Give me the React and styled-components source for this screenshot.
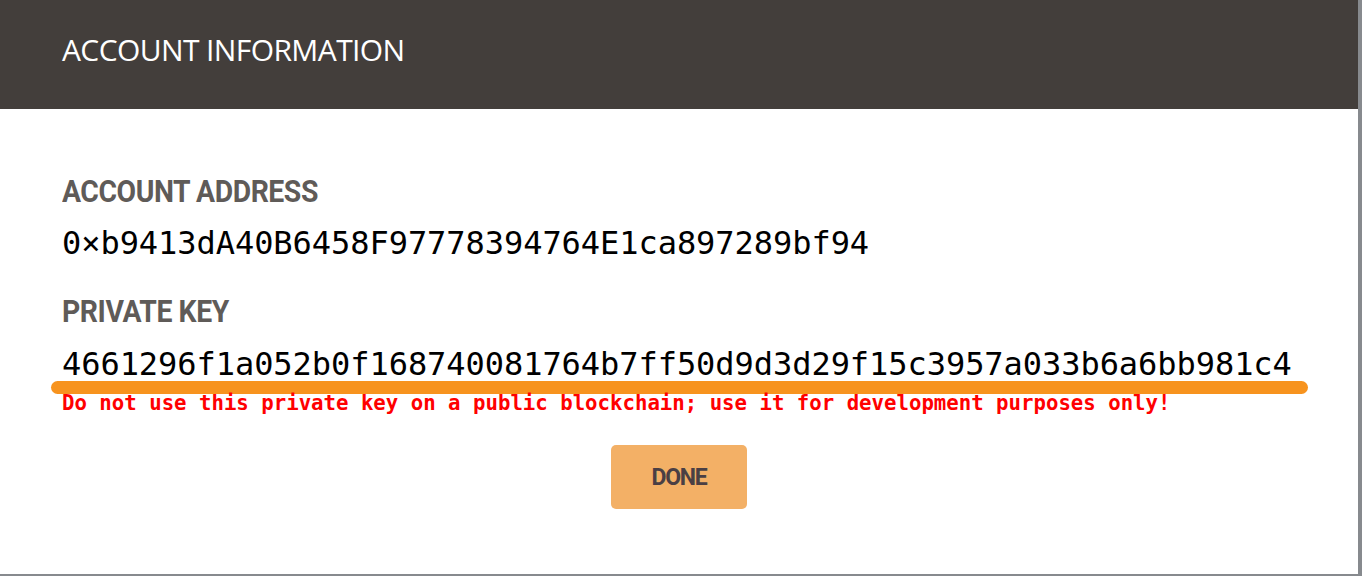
import React from 'react';
import styled, { createGlobalStyle } from 'styled-components';

const GlobalStyle = createGlobalStyle`
  html, body {
    margin: 0;
    padding: 0;
    background: #878a8e;
  }
  #root {
    width: 1362px;
    height: 576px;
  }
`;

const Modal = styled.div`
  width: 1358px;
  height: 574px;
  background: #ffffff;
  display: flex;
  flex-direction: column;
`;

const Header = styled.header`
  height: 109px;
  flex-shrink: 0;
  background: #433e3b;
  display: flex;
  align-items: center;
  padding: 0 62px;
  box-sizing: border-box;
`;

const Title = styled.h1`
  margin: 0;
  padding-bottom: 10px;
  font-family: 'Open Sans', sans-serif;
  font-weight: 400;
  font-size: 30px;
  letter-spacing: -0.6px;
  color: #ffffff;
`;

const Body = styled.div`
  padding: 64px 62px 0;
  display: flex;
  flex-direction: column;
`;

const Label = styled.h2`
  margin: 0;
  margin-top: ${(p) => p.$top || 0}px;
  font-family: Roboto, sans-serif;
  font-weight: 700;
  font-size: 32px;
  letter-spacing: -0.5px;
  line-height: 36px;
  color: #5f5b58;

  span {
    display: inline-block;
    transform: scaleX(0.886);
    transform-origin: left center;
  }
`;

const Value = styled.div`
  font-family: 'DejaVu Sans Mono', monospace;
  font-size: 32px;
  line-height: 40px;
  color: #000000;
  margin-top: 14px;
  letter-spacing: -0.05px;
`;

const KeyBox = styled.div`
  margin-top: 15px;
  margin-left: -11px;
  width: 1257px;
  display: flex;
  flex-direction: column;
`;

const KeyText = styled(Value)`
  margin-top: 0;
  padding-left: 11px;
`;

const Underline = styled.div`
  height: 13px;
  margin-top: -3px;
  border-radius: 7px;
  background: #f7931e;
`;

const Warning = styled.div`
  margin-top: -3px;
  padding-left: 11px;
  font-family: 'DejaVu Sans Mono', monospace;
  font-weight: 700;
  font-size: 20.7px;
  line-height: 24px;
  color: #ff0000;
`;

const Actions = styled.div`
  display: flex;
  justify-content: center;
  margin-top: 30px;
`;

const DoneButton = styled.button`
  width: 136px;
  height: 64px;
  padding: 0;
  border: none;
  border-radius: 5px;
  background: #f3b066;
  color: #4a3f44;
  font-family: Roboto, sans-serif;
  font-weight: 700;
  font-size: 23px;
  letter-spacing: -1.2px;
  cursor: pointer;
`;

export default function App() {
  return (
    <>
      <GlobalStyle />
      <Modal>
        <Header>
          <Title>ACCOUNT INFORMATION</Title>
        </Header>
        <Body>
          <Label><span>ACCOUNT ADDRESS</span></Label>
          <Value>0×b9413dA40B6458F97778394764E1ca897289bf94</Value>
          <Label $top={30}><span>PRIVATE KEY</span></Label>
          <KeyBox>
            <KeyText>4661296f1a052b0f168740081764b7ff50d9d3d29f15c3957a033b6a6bb981c4</KeyText>
            <Underline />
            <Warning>Do not use this private key on a public blockchain; use it for development purposes only!</Warning>
          </KeyBox>
          <Actions>
            <DoneButton>DONE</DoneButton>
          </Actions>
        </Body>
      </Modal>
    </>
  );
}
